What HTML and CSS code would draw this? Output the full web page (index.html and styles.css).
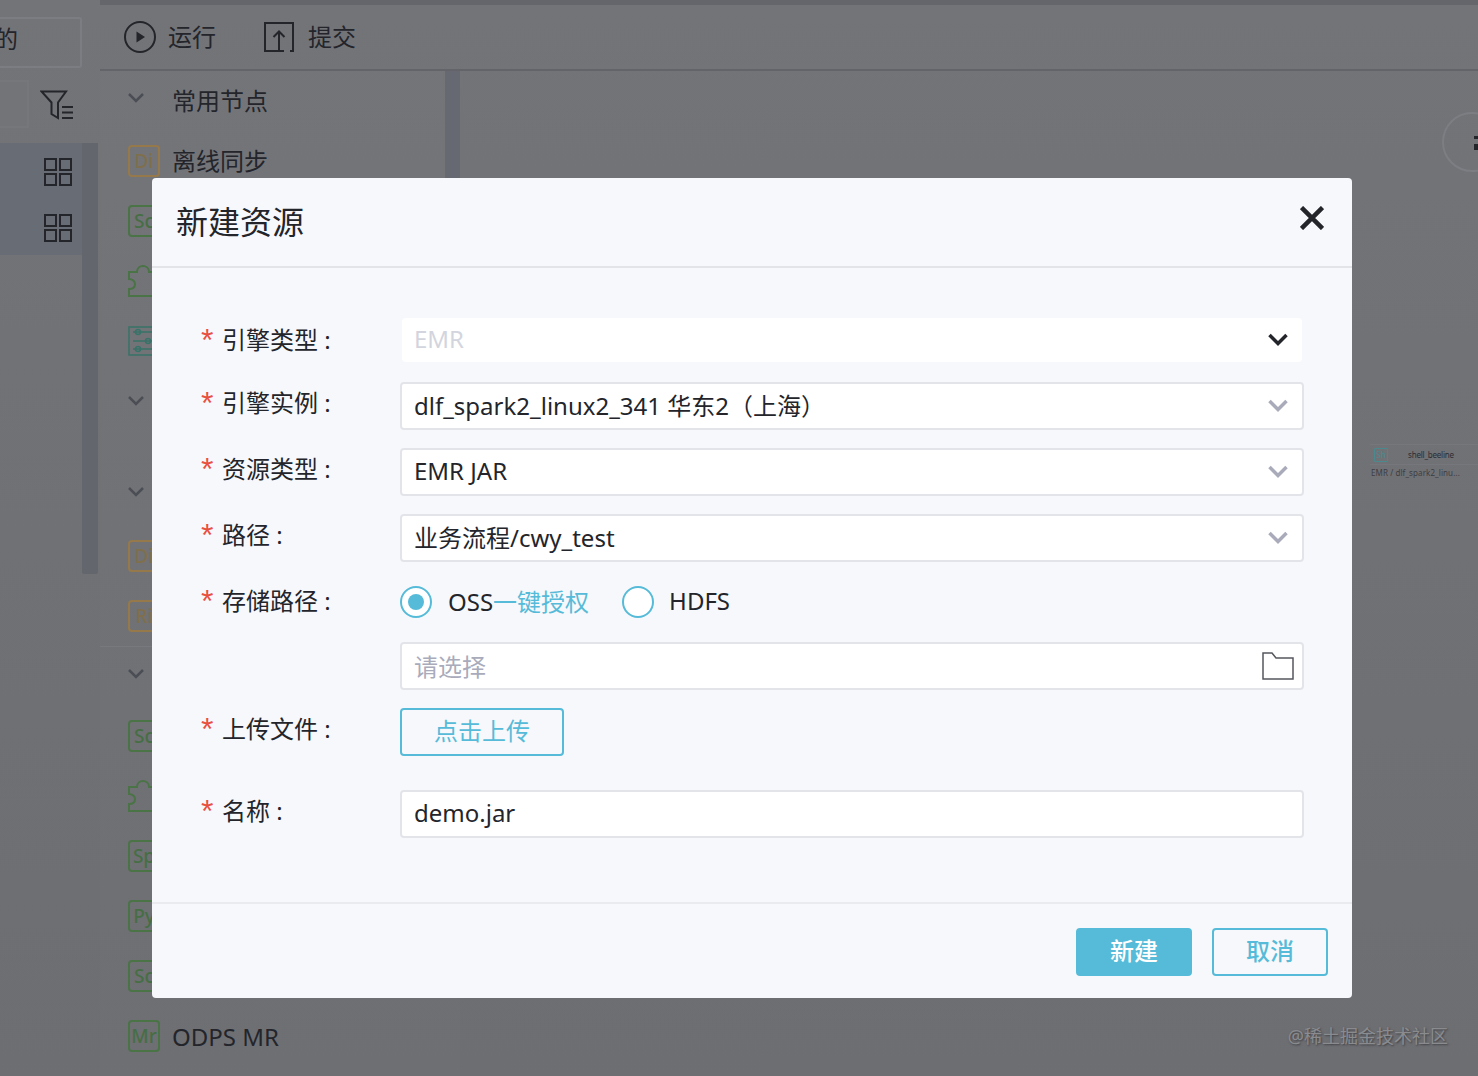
FILE: index.html
```html
<!DOCTYPE html>
<html lang="zh-CN">
<head>
  <meta charset="UTF-8">
  <title>新建资源</title>
  <link rel="stylesheet" href="styles.css">
</head>
<body>
  <div class="app">
    <div class="side">
      <div class="sideTitle"><span>的</span></div>
      <div class="sideSearch">
        <div class="searchBox"></div>
        <svg class="filterIcon" width="34" height="32" viewBox="0 0 34 32" fill="none" stroke="#23252b" stroke-width="2">
          <path d="M1.500 2.500H26L18 13.500V29L11.500 25V13.500Z"/>
          <path d="M22 18H33M22 23.500H33M22 29H33"/>
        </svg>
      </div>
      <div class="sideList">
        <div class="sideRows">
          <div class="sideRow">
            <svg width="28" height="28" viewBox="0 0 28 28" fill="none" stroke="#23252b" stroke-width="2"><path d="M1 1H12V12H1ZM16 1H27V12H16ZM1 16H12V27H1ZM16 16H27V27H16Z"/></svg>
          </div>
          <div class="sideRow">
            <svg width="28" height="28" viewBox="0 0 28 28" fill="none" stroke="#23252b" stroke-width="2"><path d="M1 1H12V12H1ZM16 1H27V12H16ZM1 16H12V27H1ZM16 16H27V27H16Z"/></svg>
          </div>
        </div>
        <div class="sideScroll"></div>
      </div>
    </div>

    <div class="main">
      <div class="toolbar">
        <div class="toolItem">
          <svg width="32" height="32" viewBox="0 0 32 32" fill="none" stroke="#23252b" stroke-width="2"><circle cx="16" cy="16" r="15"/><path d="M12.500 10.500L21 16L12.500 21.500Z" fill="#23252b" stroke="none"/></svg>
          <span>运行</span>
        </div>
        <div class="toolItem">
          <svg class="uploadIcon" width="30" height="30" viewBox="0 0 30 30" fill="none" stroke="#23252b" stroke-width="2"><path d="M20 29H1V1H29V29H26"/><path d="M15 29V10M9.500 15L15 9.500L20.500 15"/></svg>
          <span>提交</span>
        </div>
      </div>

      <div class="workspace">
        <div class="palette">
          <div class="paletteList">
            <div class="groupRow">
              <svg class="arrow" width="16" height="10" viewBox="0 0 16 10" fill="none" stroke="#4c4e55" stroke-width="2.500"><path d="M1 1L8 8L15 1"/></svg>
              <span>常用节点</span>
            </div>
            <div class="nodeRow"><span class="tag orange">Di</span><span class="nodeName nodeNameCn">离线同步</span></div>
            <div class="nodeRow"><span class="tag green">Sc</span></div>
            <div class="nodeRow">
              <svg width="32" height="32" viewBox="0 0 32 32" fill="none" stroke="#4a7346" stroke-width="2"><path d="M1 31V24C5 24 7 22 7 19C7 16 4 14 1 14V7H9C9 3 12 1 15 1C18 1 21 3 21 7H31V31Z"/></svg>
            </div>
            <div class="nodeRow">
              <svg width="32" height="32" viewBox="0 0 32 32" fill="none" stroke="#38736a" stroke-width="1.500"><path d="M1 2H31V30H1Z"/><path d="M5 7H31M5 16H31M5 24H31"/><circle cx="10" cy="7" r="2.500"/><circle cx="20" cy="16" r="2.500"/><circle cx="10" cy="24" r="2.500"/></svg>
            </div>
            <div class="groupRow groupLine">
              <svg class="arrow" width="16" height="10" viewBox="0 0 16 10" fill="none" stroke="#4c4e55" stroke-width="2.500"><path d="M1 1L8 8L15 1"/></svg>
            </div>
            <div class="groupRow groupGap">
              <svg class="arrow" width="16" height="10" viewBox="0 0 16 10" fill="none" stroke="#4c4e55" stroke-width="2.500"><path d="M1 1L8 8L15 1"/></svg>
            </div>
            <div class="nodeRow"><span class="tag orange">Di</span></div>
            <div class="nodeRow"><span class="tag orange">Ri</span></div>
            <div class="groupRow groupShort">
              <svg class="arrow" width="16" height="10" viewBox="0 0 16 10" fill="none" stroke="#4c4e55" stroke-width="2.500"><path d="M1 1L8 8L15 1"/></svg>
            </div>
            <div class="nodeRow"><span class="tag green">Sc</span></div>
            <div class="nodeRow">
              <svg width="32" height="32" viewBox="0 0 32 32" fill="none" stroke="#4a7346" stroke-width="2"><path d="M1 31V24C5 24 7 22 7 19C7 16 4 14 1 14V7H9C9 3 12 1 15 1C18 1 21 3 21 7H31V31Z"/></svg>
            </div>
            <div class="nodeRow"><span class="tag green">Sp</span></div>
            <div class="nodeRow"><span class="tag green">Py</span></div>
            <div class="nodeRow"><span class="tag green">Sc</span></div>
            <div class="nodeRow"><span class="tag green">Mr</span><span class="nodeName">ODPS MR</span></div>
          </div>
          <div class="paletteScroll"></div>
        </div>

        <div class="canvas">
          <div class="zoomBtn"><span class="zoomGlyph"></span></div>
          <div class="canvasNode">
            <div class="canvasNodeTop"><span class="canvasTag">Sh</span><span class="canvasName">shell_beeline</span></div>
            <div class="canvasNodeSub">EMR / dlf_spark2_linu...</div>
          </div>
          <div class="watermark">@稀土掘金技术社区</div>
        </div>
      </div>
    </div>
  </div>

  <div class="dialog">
    <div class="dialogHead">
      <span class="dialogTitle">新建资源</span>
      <svg class="closeIcon" width="24" height="24" viewBox="0 0 24 24" fill="none" stroke="#23252b" stroke-width="4.500"><path d="M1.500 1.500L22.500 22.500M22.500 1.500L1.500 22.500"/></svg>
    </div>

    <div class="dialogBody">
      <div class="formRow rowFirst">
        <div class="label"><i>*</i>引擎类型 :</div>
        <div class="field fieldDisabled">
          <span class="fieldText">EMR</span>
          <svg width="20" height="13" viewBox="0 0 20 13" fill="none" stroke="#23252b" stroke-width="3.500"><path d="M1.500 2L10 10.500L18.500 2"/></svg>
        </div>
      </div>
      <div class="formRow">
        <div class="label"><i>*</i>引擎实例 :</div>
        <div class="field">
          <span class="fieldText">dlf_spark2_linux2_341 华东2（上海）</span>
          <svg width="20" height="13" viewBox="0 0 20 13" fill="none" stroke="#a9abbb" stroke-width="3.500"><path d="M1.500 2L10 10.500L18.500 2"/></svg>
        </div>
      </div>
      <div class="formRow">
        <div class="label"><i>*</i>资源类型 :</div>
        <div class="field">
          <span class="fieldText">EMR JAR</span>
          <svg width="20" height="13" viewBox="0 0 20 13" fill="none" stroke="#a9abbb" stroke-width="3.500"><path d="M1.500 2L10 10.500L18.500 2"/></svg>
        </div>
      </div>
      <div class="formRow">
        <div class="label"><i>*</i>路径 :</div>
        <div class="field">
          <span class="fieldText">业务流程/cwy_test</span>
          <svg width="20" height="13" viewBox="0 0 20 13" fill="none" stroke="#a9abbb" stroke-width="3.500"><path d="M1.500 2L10 10.500L18.500 2"/></svg>
        </div>
      </div>
      <div class="formRow rowRadio">
        <div class="label"><i>*</i>存储路径 :</div>
        <div class="radios">
          <span class="radio radioOn"></span>
          <span class="radioText">OSS<em>一键授权</em></span>
          <span class="radio"></span>
          <span class="radioText">HDFS</span>
        </div>
      </div>
      <div class="formRow rowPick">
        <div class="label"></div>
        <div class="field">
          <span class="fieldText placeholder">请选择</span>
          <svg class="folderIcon" width="32" height="28" viewBox="0 0 32 28" fill="none" stroke="#55575f" stroke-width="1.500"><path d="M1 27V1H10L14 6H31V27Z"/></svg>
        </div>
      </div>
      <div class="formRow">
        <div class="label"><i>*</i>上传文件 :</div>
        <div class="uploadBtn">点击上传</div>
      </div>
      <div class="formRow rowName">
        <div class="label"><i>*</i>名称 :</div>
        <div class="field"><span class="fieldText">demo.jar</span></div>
      </div>
    </div>

    <div class="dialogFoot">
      <div class="btn btnPrimary">新建</div>
      <div class="btn">取消</div>
    </div>
  </div>
</body>
</html>
```

FILE: styles.css
```css
* {
  margin: 0;
  padding: 0;
  box-sizing: border-box;
}
html, body {
  height: 100%;
  overflow: hidden;
}
body {
  position: relative;
  background: linear-gradient(#737478, #6d6e72);
  color: #23252b;
  font-family: "Noto Sans", "Noto Sans CJK SC", sans-serif;
  font-size: 24px;
}
.app {
  display: flex;
  height: 100%;
}

/* left column */
.side {
  width: 100px;
  flex-shrink: 0;
  padding-top: 17px;
}
.sideTitle {
  width: 82px;
  height: 51px;
  border: 2px solid #7c7d82;
  border-left: none;
  border-radius: 0 3px 3px 0;
  line-height: 40px;
  overflow: hidden;
}
.sideTitle span {
  display: block;
  margin-left: -6px;
}
.sideSearch {
  display: flex;
  align-items: flex-start;
  gap: 11px;
  margin-top: 12px;
}
.searchBox {
  width: 29px;
  height: 48px;
  border: 2px solid #76777b;
  border-left: none;
  background-color: #737478;
}
.filterIcon {
  margin-top: 9px;
}
.sideList {
  display: flex;
  margin-top: 15px;
  height: 431px;
}
.sideRows {
  width: 82px;
  height: 112px;
  padding-top: 1px;
  background-color: #686c75;
}
.sideRow {
  display: flex;
  justify-content: flex-end;
  align-items: center;
  height: 56px;
  padding-right: 10px;
}
.sideScroll {
  width: 16px;
  background-color: #64666e;
  border-radius: 0 0 2px 2px;
}

/* toolbar */
.main {
  flex: 1;
  display: flex;
  flex-direction: column;
  min-width: 0;
}
.toolbar {
  display: flex;
  align-items: center;
  gap: 48px;
  height: 71px;
  padding-left: 24px;
  border-top: 5px solid #65666b;
  border-bottom: 2px solid #63646a;
}
.toolItem {
  display: flex;
  align-items: center;
  gap: 12px;
}
.toolItem span {
  margin-bottom: 4px;
}
.uploadIcon {
  margin-right: 2px;
}
.workspace {
  flex: 1;
  display: flex;
  min-height: 0;
}

/* node palette */
.palette {
  display: flex;
  width: 360px;
  flex-shrink: 0;
  overflow: hidden;
  background-color: rgba(255, 255, 255, .01);
}
.paletteList {
  width: 345px;
  flex-shrink: 0;
}
.paletteScroll {
  width: 15px;
  height: 300px;
  background-color: #666872;
}
.groupRow, .nodeRow {
  display: flex;
  align-items: center;
  height: 60px;
  padding-left: 28px;
}
.groupRow span {
  margin: 0 0 4px 28px;
}
.arrow {
  margin-top: -6px;
}
.groupLine .arrow {
  margin-top: 0;
}
.groupGap {
  height: 95px;
  padding-top: 32px;
}
.groupShort {
  border-top: 1px solid #78797e;
}
.nodeName {
  margin-left: 12px;
}
.nodeNameCn {
  margin-bottom: 4px;
}
.tag {
  display: flex;
  align-items: center;
  justify-content: center;
  width: 32px;
  height: 32px;
  flex-shrink: 0;
  border: 2px solid;
  border-radius: 4px;
  font-size: 19px;
  font-weight: 500;
  line-height: 24px;
}
.orange {
  border-color: #96794a;
  color: #7f6f4c;
}
.green {
  border-color: #4a7346;
  color: #466e44;
}

/* canvas */
.canvas {
  flex: 1;
  position: relative;
}
.zoomBtn {
  position: absolute;
  left: 982px;
  top: 41px;
  width: 60px;
  height: 60px;
  border: 2px solid #7d7e83;
  border-radius: 50%;
  overflow: hidden;
}
.zoomGlyph {
  position: absolute;
  left: 30px;
  top: 22px;
  width: 12px;
  height: 14px;
  border-top: 3px solid #23252b;
  border-bottom: 6px solid #23252b;
}
.canvasNode {
  position: absolute;
  left: 910px;
  top: 373px;
  width: 130px;
  border-top: 1px solid #76777c;
}
.canvasNodeTop {
  display: flex;
  align-items: center;
  height: 20px;
  border-bottom: 1px solid #76777c;
}
.canvasTag {
  width: 14px;
  height: 14px;
  margin-left: 4px;
  border: 1px solid #4a8a8f;
  border-radius: 1px;
  color: #4a8a8f;
  font-size: 8px;
  line-height: 12px;
  text-align: center;
}
.canvasName {
  margin-left: 20px;
  font-size: 8px;
  letter-spacing: -.2px;
  line-height: 12px;
  color: #2b2d33;
}
.canvasNodeSub {
  margin: 2px 0 0 1px;
  font-size: 8px;
  letter-spacing: .1px;
  line-height: 12px;
  white-space: nowrap;
  color: #3c3e44;
}
.watermark {
  position: absolute;
  right: 30px;
  bottom: 27px;
  font-size: 18px;
  line-height: 26px;
  color: #8a8b8f;
  text-shadow: 1px 1px 2px #3e3f43;
}

/* dialog */
.dialog {
  position: absolute;
  left: 152px;
  top: 178px;
  width: 1200px;
  height: 820px;
  display: flex;
  flex-direction: column;
  background-color: #f7f8fb;
  border-radius: 4px;
}
.dialogHead {
  display: flex;
  justify-content: space-between;
  align-items: flex-start;
  height: 90px;
  padding: 22px 28px 0 24px;
  border-bottom: 2px solid #e3e4e8;
}
.dialogTitle {
  font-size: 32px;
  line-height: 44px;
}
.closeIcon {
  margin: 6px 0 0 0;
}
.dialogBody {
  flex: 1;
  padding: 50px 48px 0 48px;
}
.formRow {
  display: flex;
  margin-top: 18px;
}
.rowFirst {
  margin-top: 0;
  margin-bottom: 20px;
}
.rowRadio {
  margin-top: 16px;
  height: 48px;
}
.rowPick {
  margin-top: 16px;
}
.rowName {
  margin-top: 34px;
}
.label {
  width: 200px;
  flex-shrink: 0;
  height: 42px;
  line-height: 42px;
  white-space: nowrap;
}
.rowFirst .label {
  line-height: 44px;
}
.rowRadio .label {
  line-height: 46px;
}
.label i {
  display: inline-block;
  width: 21px;
  margin-left: 1px;
  color: #e8503f;
  font-size: 32px;
  line-height: 0;
  vertical-align: -2px;
  font-style: normal;
  font-family: "Liberation Sans", sans-serif;
}
.field {
  display: flex;
  align-items: center;
  justify-content: space-between;
  width: 904px;
  height: 48px;
  padding: 0 14px 4px 12px;
  background-color: #fff;
  border: 2px solid #e3e4ea;
  border-radius: 4px;
}
.field svg {
  margin-top: 2px;
}
.fieldDisabled {
  width: 900px;
  height: 44px;
  margin-left: 2px;
  border: none;
}
.fieldDisabled .fieldText {
  color: #d3d5de;
}
.fieldText {
  white-space: nowrap;
}
.placeholder {
  margin-top: 2px;
  color: #a9abbb;
}
.field .folderIcon {
  margin: 4px -6px 0 0;
}
.radios {
  display: flex;
  align-items: center;
  height: 48px;
}
.radio {
  position: relative;
  width: 32px;
  height: 32px;
  border: 2px solid #56bbd8;
  border-radius: 50%;
  background-color: #fff;
}
.radioOn::after {
  content: "";
  position: absolute;
  left: 6px;
  top: 6px;
  width: 16px;
  height: 16px;
  border-radius: 50%;
  background-color: #56bbd8;
}
.radioText {
  margin: 0 33px 4px 16px;
}
.radioText:last-child {
  margin-left: 15px;
}
.radioText em {
  font-style: normal;
  color: #56bbd8;
}
.uploadBtn {
  width: 164px;
  height: 48px;
  border: 2px solid #56bbd8;
  border-radius: 4px;
  color: #56bbd8;
  line-height: 42px;
  text-align: center;
}
.dialogFoot {
  display: flex;
  justify-content: flex-end;
  gap: 20px;
  height: 96px;
  padding: 24px 24px 0 0;
  border-top: 2px solid #eaebef;
}
.btn {
  width: 116px;
  height: 48px;
  border: 2px solid #56bbd8;
  border-radius: 4px;
  color: #56bbd8;
  font-weight: 500;
  line-height: 42px;
  text-align: center;
}
.btnPrimary {
  background-color: #56bbd8;
  color: #fff;
}
```
